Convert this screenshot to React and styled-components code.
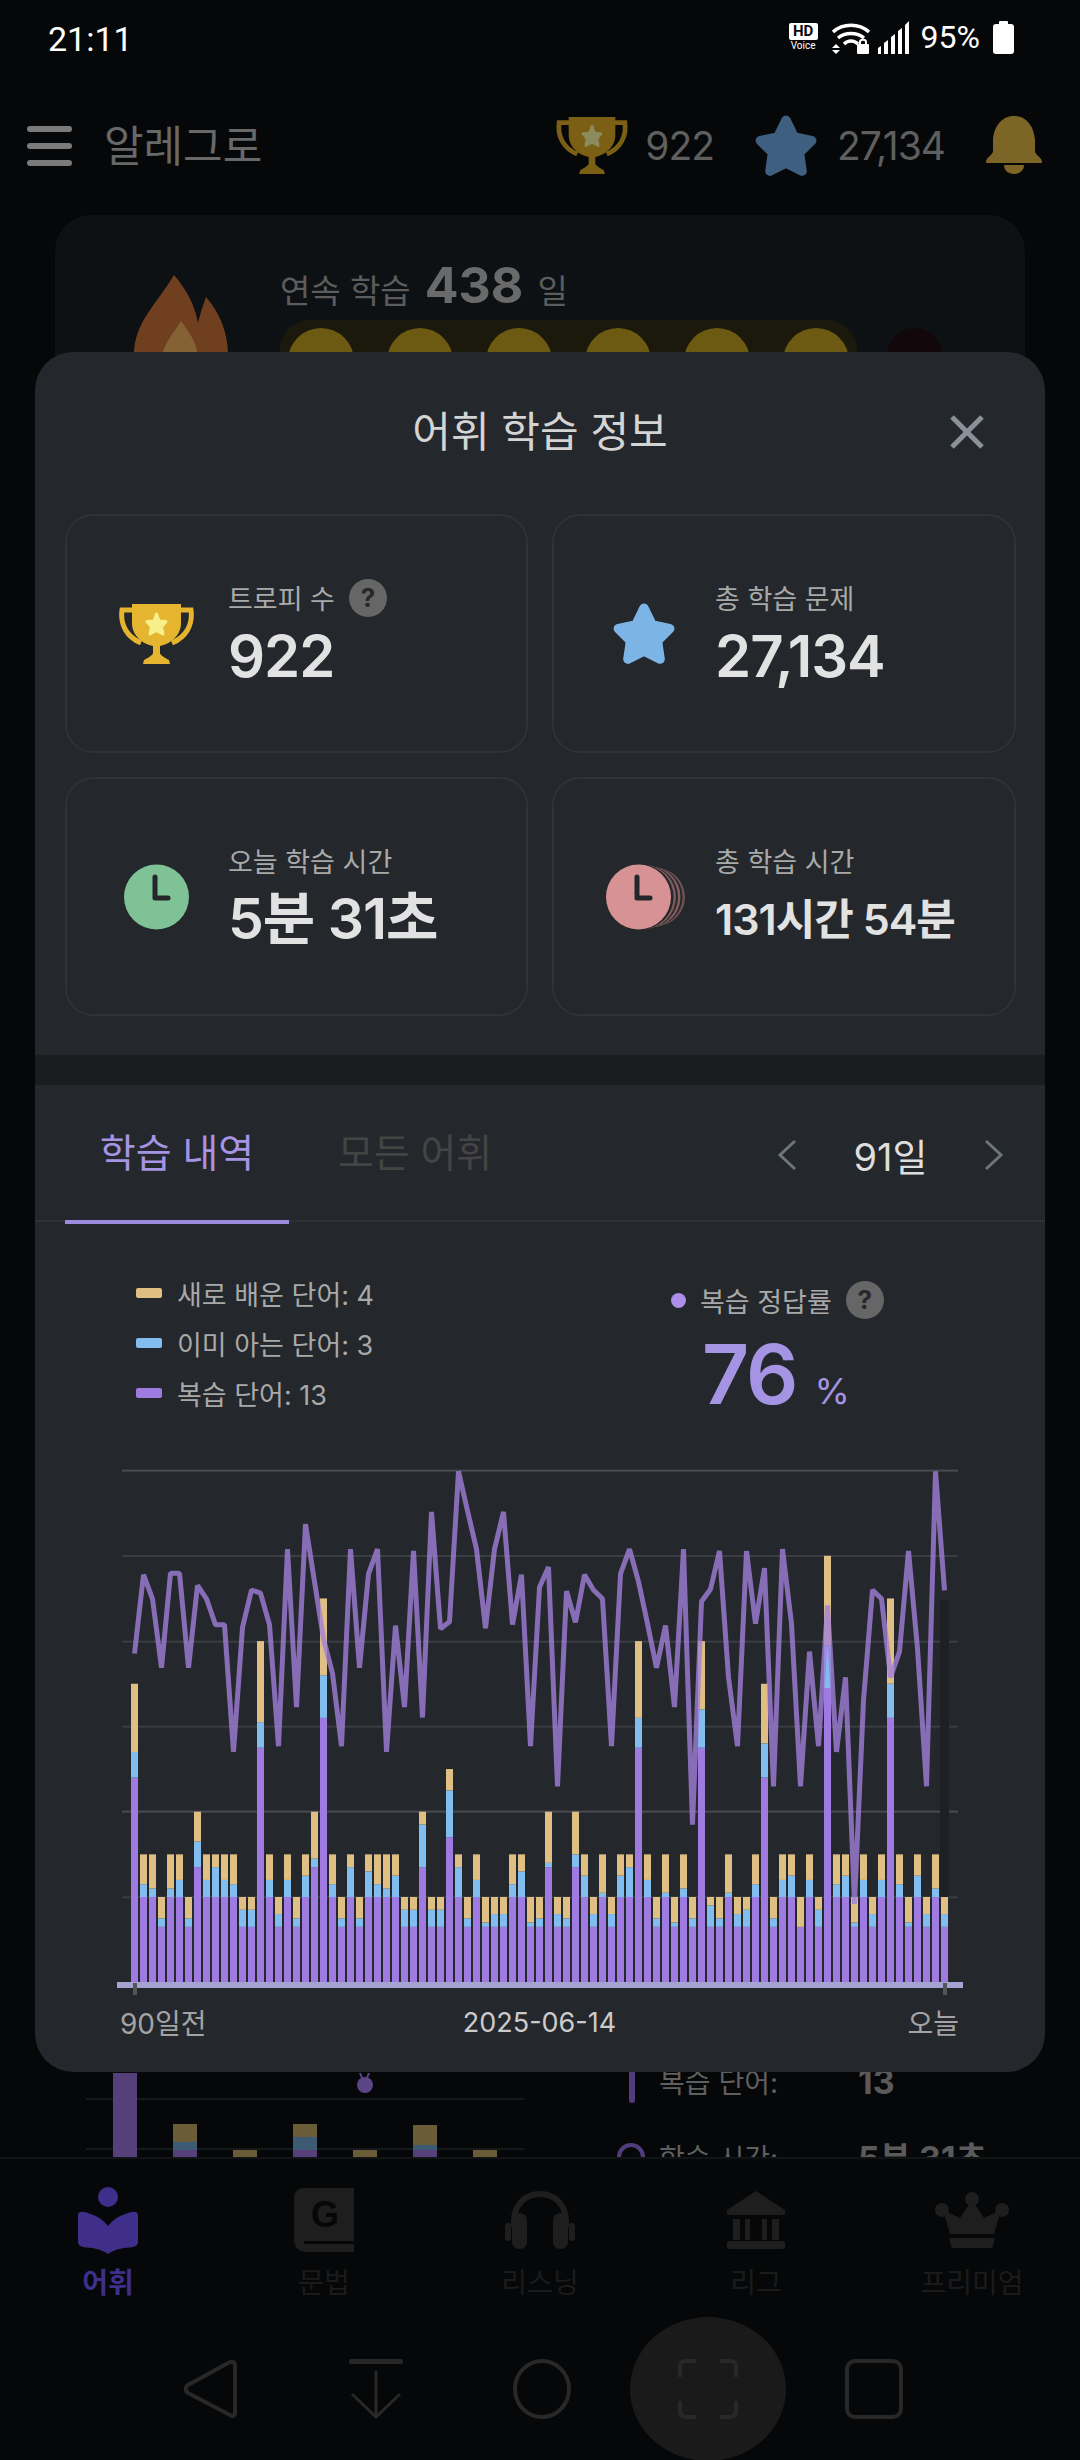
import React from 'react';
import styled, { createGlobalStyle } from 'styled-components';

const FONT = `Inter, "Noto Sans CJK KR", "Noto Sans", sans-serif`;

const Global = createGlobalStyle`
  html, body { margin: 0; padding: 0; background: #060708; }
  * { box-sizing: border-box; }
`;

const Screen = styled.div`
  position: relative;
  width: 1080px;
  height: 2460px;
  overflow: hidden;
  background: #060708;
  font-family: ${FONT};
  display: flex;
  flex-direction: column;
`;

/* status bar */
const StatusBar = styled.div`
  height: 76px;
  padding: 20px 66px 0 48px;
  display: flex;
  align-items: flex-start;
  justify-content: space-between;
  color: #fff;
  font-family: Roboto, sans-serif;
`;
const Clock = styled.span`
  font-size: 34px;
  line-height: 36px;
  margin-top: 1px;
`;
const StatusRight = styled.div`
  display: flex;
  align-items: center;
  height: 34px;
  gap: 7px;
`;
const Percent = styled.span`
  font-size: 32px;
  line-height: 34px;
  margin: 0 6px 0 4px;
`;
const HdBadge = styled.span`
  display: flex;
  flex-direction: column;
  align-items: center;
  width: 29px;
  margin-right: 6px;
  color: #fff;
`;
const HdBox = styled.span`
  width: 29px;
  height: 17px;
  background: #fff;
  color: #060708;
  border-radius: 2px;
  font: 700 15px/17px Roboto, sans-serif;
  text-align: center;
`;
const VoiceText = styled.span`
  font: 400 10px/11px Roboto, sans-serif;
`;

/* app header */
const AppHeader = styled.header`
  height: 139px;
  padding: 0 38px 0 27px;
  display: flex;
  align-items: center;
`;
const Burger = styled.div`
  width: 45px;
  height: 40px;
  display: flex;
  flex-direction: column;
  justify-content: space-between;
  & > i {
    display: block;
    height: 6px;
    border-radius: 3px;
    background: #7b7b7b;
  }
`;
const AppName = styled.span`
  margin-left: 32px;
  font-size: 43px;
  line-height: 48px;
  color: #686868;
  flex: 1;
`;
const Stat = styled.div`
  display: flex;
  align-items: center;
  gap: ${(p) => p.$gap}px;
  margin-right: ${(p) => p.$mr}px;
  font-size: 39px;
  letter-spacing: -1px;
  color: #5f5f5f;
`;

/* page behind the sheet */
const Behind = styled.main`
  flex: 1;
  min-height: 0;
  overflow: hidden;
  display: flex;
  flex-direction: column;
  justify-content: space-between;
`;
const StreakCard = styled.section`
  margin: 0 55px;
  height: 400px;
  border-radius: 36px;
  background: #0d1113;
  display: flex;
  padding: 47px 0 0 79px;
  gap: 52px;
`;
const StreakBody = styled.div`
  display: flex;
  flex-direction: column;
  gap: 6px;
`;
const StreakTitle = styled.div`
  display: flex;
  align-items: baseline;
  color: #5c5c5c;
  font-size: 33px;
  line-height: 46px;
  gap: 14px;
  & b {
    font-size: 50px;
    color: #6a6a6a;
    font-weight: 700;
  }
`;
const CoinLine = styled.div`
  display: flex;
  align-items: flex-start;
  gap: 30px;
`;
const CoinRow = styled.div`
  width: 577px;
  height: 70px;
  border-radius: 30px;
  background: #1a190c;
  padding: 8px 8px 0;
  display: flex;
  gap: 33px;
`;
const Coin = styled.span`
  width: 66px;
  height: 66px;
  border-radius: 50%;
  background: #6d5a12;
  flex: none;
`;
const DimCoin = styled.span`
  width: 56px;
  height: 56px;
  margin-top: 8px;
  border-radius: 50%;
  background: #12070a;
  flex: none;
`;
const CutRow = styled.div`
  height: 84px;
  flex: none;
  display: flex;
  padding-left: 86px;
`;
const CutList = styled.div`
  margin: -14px 0 0 91px;
  display: flex;
  flex-direction: column;
  gap: 43px;
`;
const CutItem = styled.div`
  display: grid;
  grid-template-columns: 42px 199px auto;
  align-items: center;
  height: 30px;
  color: #5f5f5f;
  font-size: 28px;
  & b {
    font-size: 34px;
    font-weight: 700;
    color: #5a5a5a;
  }
`;
const CutBar = styled.i`
  width: 6px;
  height: 44px;
  background: #513d7c;
  border-radius: 3px;
  margin-left: 12px;
`;
const CutClock = styled.i`
  width: 28px;
  height: 28px;
  border: 4px solid #513d7c;
  border-radius: 50%;
`;

/* bottom nav */
const BottomNav = styled.nav`
  flex: none;
  height: 160px;
  border-top: 2px solid #111416;
  display: grid;
  grid-template-columns: repeat(5, 216px);
`;
const NavItem = styled.div`
  display: flex;
  flex-direction: column;
  align-items: center;
  padding-top: 26px;
  gap: 11px;
  color: ${(p) => p.$color};
  font-size: 28px;
  line-height: 34px;
  font-weight: ${(p) => (p.$active ? 700 : 400)};
`;
const NavIconBox = styled.div`
  height: 70px;
  display: flex;
  align-items: center;
`;

const SysNav = styled.div`
  flex: none;
  height: 143px;
  padding-left: 127px;
  display: flex;
`;
const SysSlot = styled.div`
  width: 166px;
  height: 143px;
  display: flex;
  align-items: center;
  justify-content: center;
`;
const CaptureRound = styled.div`
  width: 156px;
  height: 144px;
  border-radius: 50%;
  background: #1a1a1a;
  display: flex;
  align-items: center;
  justify-content: center;
`;

/* modal sheet */
const Sheet = styled.section`
  position: absolute;
  top: 352px;
  left: 35px;
  width: 1010px;
  height: 1720px;
  border-radius: 38px;
  background: #24272b;
  display: flex;
  flex-direction: column;
`;
const SheetHead = styled.div`
  height: 162px;
  display: grid;
  grid-template-columns: 1fr auto 1fr;
  align-items: center;
  padding: 0 60px 3px;
`;
const SheetTitle = styled.h2`
  grid-column: 2;
  margin: 0;
  font-size: 42px;
  line-height: 50px;
  font-weight: 400;
  color: #d4d4d4;
`;
const CloseBtn = styled.div`
  grid-column: 3;
  justify-self: end;
  width: 36px;
  height: 36px;
`;
const CardGrid = styled.div`
  padding: 0 29px 0 30px;
  display: grid;
  grid-template-columns: 463px 464px;
  grid-auto-rows: 239px;
  column-gap: 24px;
  row-gap: 24px;
`;
const Card = styled.div`
  border: 2px solid #2f3236;
  border-radius: 28px;
  display: grid;
  grid-template-columns: 161px 1fr;
  align-items: center;
`;
const CardIcon = styled.div`
  display: flex;
  justify-content: center;
  padding-left: ${(p) => p.$pad || 18}px;
`;
const CardText = styled.div`
  display: flex;
  flex-direction: column;
  gap: 10px;
`;
const CardLabel = styled.div`
  display: flex;
  align-items: center;
  gap: 14px;
  height: 34px;
  font-size: 27px;
  color: #a9a9a9;
`;
const CardValue = styled.div`
  height: 62px;
  font-size: ${(p) => p.$size}px;
  line-height: 62px;
  font-weight: 600;
  letter-spacing: ${(p) => p.$ls}px;
  color: #e2e2e2;
  white-space: nowrap;
`;
const Help = styled.span`
  width: 38px;
  height: 38px;
  flex: none;
  border-radius: 50%;
  background: #666;
  color: #26282b;
  font: 700 26px/38px ${FONT};
  text-align: center;
`;
const Band = styled.div`
  margin-top: 39px;
  height: 30px;
  background: #1a1c1f;
  flex: none;
`;
const TabBar = styled.div`
  height: 137px;
  flex: none;
  border-bottom: 2px solid #2e3135;
  display: flex;
  padding: 0 41px 0 30px;
`;
const Tab = styled.div`
  position: relative;
  width: ${(p) => p.$w}px;
  height: 137px;
  padding-top: 45px;
  text-align: center;
  font-size: 39px;
  line-height: 46px;
  color: ${(p) => (p.$on ? '#a594e4' : '#444')};
  ${(p) =>
    p.$on
      ? `&::after { content: ''; position: absolute; left: 0; right: 0; bottom: -2px; height: 4px; background: #9d8be0; }`
      : ''}
`;
const Period = styled.div`
  margin-left: auto;
  height: 139px;
  display: flex;
  align-items: center;
  font-size: 38px;
  color: #dedede;
`;
const PeriodLabel = styled.span`
  width: 187px;
  text-align: center;
`;
const LegendArea = styled.div`
  flex: none;
  height: 218px;
  display: flex;
  padding: 53px 0 0 101px;
`;
const LegendList = styled.div`
  width: 535px;
  display: flex;
  flex-direction: column;
  gap: 14px;
`;
const LegendRow = styled.div`
  display: flex;
  align-items: center;
  height: 36px;
  gap: 15px;
  font-size: 27px;
  color: #a9a9a9;
  &::before {
    content: '';
    width: 26px;
    height: 10px;
    border-radius: 2px;
    background: ${(p) => p.$c};
  }
`;
const RateBox = styled.div`
  display: flex;
  flex-direction: column;
`;
const RateHead = styled.div`
  display: flex;
  align-items: center;
  font-size: 27px;
  height: 40px;
  margin-top: 5px;
  color: #a9a9a9;
  gap: 14px;
  &::before {
    content: '';
    width: 15px;
    height: 15px;
    border-radius: 50%;
    background: #ad8ee8;
  }
`;
const RateValue = styled.div`
  margin: 9px 0 0 31px;
  display: flex;
  align-items: baseline;
  gap: 18px;
  color: #a594e4;
  font-size: 36px;
  & b {
    font-size: 82px;
    line-height: 92px;
    font-weight: 600;
    letter-spacing: -2px;
  }
`;
const ChartSvg = styled.svg`
  display: block;
  flex: none;
`;
const AxisLabels = styled.div`
  flex: none;
  display: grid;
  grid-template-columns: 1fr auto 1fr;
  align-items: center;
  padding: 0 86px 0 85px;
  height: 44px;
  font-size: 28px;
  color: #a3a3a3;
  & > :last-child {
    justify-self: end;
  }
`;
const DateLabel = styled.span`
  color: #cbcbcb;
  font-size: 27px;
`;

/* data read from the picture: review, known, new */
const BARS = `48,6,16 20,3,7 20,2,8 13,2,5 20,2,8 20,4,6 13,2,5 27,6,7 20,4,6 20,7,3 20,4,6 20,3,7 13,4,3 13,4,3 55,6,19 20,4,6 13,3,4 20,4,6 13,2,5 20,5,5 27,2,11 62,10,18 20,3,7 13,2,5 20,7,3 13,2,5 20,6,4 20,3,7 20,2,8 20,5,5 13,4,3 13,4,3 27,10,3 13,4,3 13,4,3 34,11,5 20,7,3 13,2,5 20,4,6 13,1,6 13,3,4 13,3,4 20,3,7 20,6,4 13,1,6 13,2,5 27,1,12 13,3,4 13,2,5 27,3,10 20,5,5 13,3,4 20,1,9 13,3,4 20,5,5 20,7,3 55,7,18 20,4,6 13,2,5 20,1,9 13,1,6 20,2,8 13,2,5 55,9,16 13,5,2 13,2,5 20,1,9 13,3,4 13,4,3 20,3,7 48,8,14 13,2,5 20,4,6 20,5,5 13,0,7 20,4,6 13,4,3 69,10,21 20,3,7 20,5,5 13,1,6 20,4,6 13,3,4 20,4,6 62,8,20 20,3,7 13,1,6 20,5,5 13,3,4 20,2,8 13,3,4`
  .split(' ')
  .map((s) => s.split(',').map(Number));

const LINE = [558,352,415,595,348,348,595,380,415,483,483,815,490,392,400,483,800,285,698,220,370,520,610,800,285,595,350,285,815,485,698,290,725,188,493,475,82,185,285,492,285,188,482,352,800,385,332,905,395,476,352,392,415,800,350,285,370,480,595,485,698,285,1005,422,390,290,620,800,290,480,335,905,285,480,905,553,800,432,815,620,1212,680,392,415,620,553,290,545,905,82,393];

const BASE = 1982.3;
const U = 4.265;

const Chart = () => {
  const line = LINE.map((z, i) => `${134.5 + 9 * i},${(1440 + z / 2.613).toFixed(1)}`).join(' ');
  return (
    <ChartSvg width="1010" height="560" viewBox="35 1440 1010 560">
      {[1470.6, 1556, 1641.7, 1726.6, 1811.6, 1897.3].map((y, i) => (
        <rect key={y} x="122" y={y - 1} width="836" height="2" fill={i === 0 || i === 4 ? '#484c50' : '#3a3d41'} />
      ))}
      <rect x="940" y="1600" width="9" height="297" fill="#1e2023" />
      {BARS.map(([r, k, n], i) => {
        const x = 131 + 9 * i;
        const rh = r * U;
        const kh = k * U;
        const nh = n * U;
        return (
          <g key={i}>
            <rect x={x} y={BASE - rh} width="7" height={rh} fill="#9f7ae0" />
            <rect x={x} y={BASE - rh - kh} width="7" height={kh} fill="#82bdf0" />
            <rect x={x} y={BASE - rh - kh - nh} width="7" height={nh} fill="#dfbf84" />
          </g>
        );
      })}
      <rect x="117" y="1982" width="846" height="6" fill="#a5a3d2" />
      <rect x="133" y="1983" width="4" height="12" fill="#555" />
      <rect x="943" y="1983" width="4" height="12" fill="#555" />
      <polyline points={line} fill="none" stroke="#a080d8" strokeOpacity="0.8" strokeWidth="5" strokeLinejoin="bevel" />
    </ChartSvg>
  );
};

const StarShape = ({ size, fill, w = 9 }) => (
  <svg width={size} height={size} viewBox="2 1 60 60" style={{ display: 'block' }}>
    <polygon
      points="32,7 39.5,22.5 56,26 44.5,37.5 47,54.5 32,47 17,54.5 19.5,37.5 8,26 24.5,22.5"
      fill={fill}
      stroke={fill}
      strokeWidth={w}
      strokeLinejoin="round"
    />
  </svg>
);

const Trophy = ({ w, h, cup, star }) => (
  <svg width={w} height={h} viewBox="0 0 75 62" style={{ display: 'block' }}>
    <path
      d="M13 1H62V20C62 33 51 41 41 43V50C41 52 46 55 50 57L51 61H24L25 57C29 55 34 52 34 50V43C24 41 13 33 13 20Z"
      fill={cup}
    />
    <path d="M14 7H3C1 22 8 34 22 40M61 7H72C74 22 67 34 53 40" fill="none" stroke={cup} strokeWidth="5" />
    <polygon
      points="37.5,11 40,18 47,18.5 42.5,24 44,31 37.5,27.5 31,31 32.5,24 28,18.5 35,18"
      fill={star}
      stroke={star}
      strokeWidth="3"
      strokeLinejoin="round"
    />
  </svg>
);

const ClockIcon = ({ color }) => (
  <svg width="65" height="66" viewBox="0 0 65 66" style={{ display: 'block' }}>
    <circle cx="32.5" cy="33" r="32.5" fill={color} />
    <path d="M31 13V34H44" fill="none" stroke="#23262a" strokeWidth="5" strokeLinecap="round" strokeLinejoin="round" />
  </svg>
);

const StackClock = () => (
  <svg width="82" height="66" viewBox="0 0 82 66" style={{ display: 'block' }}>
    <circle cx="50" cy="33" r="29" fill="#6e5153" />
    <circle cx="47" cy="33" r="29.5" fill="#24272b" />
    <circle cx="44" cy="33" r="30.5" fill="#86605f" />
    <circle cx="41" cy="33" r="31" fill="#24272b" />
    <circle cx="38" cy="33" r="32" fill="#7d5b5d" />
    <circle cx="35" cy="33" r="32.5" fill="#24272b" />
    <circle cx="32.5" cy="33" r="32.5" fill="#d79295" />
    <path d="M31 13V34H44" fill="none" stroke="#23262a" strokeWidth="5" strokeLinecap="round" strokeLinejoin="round" />
  </svg>
);

const Chevron = ({ dir }) => (
  <svg width="20" height="32" viewBox="0 0 20 32" style={{ display: 'block' }}>
    <path d={dir === 'l' ? 'M18 2L3 16L18 30' : 'M2 2L17 16L2 30'} fill="none" stroke="#6d757d" strokeWidth="3" />
  </svg>
);

const BehindBars = () => (
  <svg width="440" height="84" viewBox="86 2072 440 84" style={{ display: 'block', flex: 'none' }}>
    <rect x="86" y="2097" width="438" height="2" fill="#14191b" />
    <rect x="86" y="2147" width="438" height="2" fill="#14191b" />
    <rect x="113" y="2072" width="24" height="84" fill="#55407a" />
    <rect x="173" y="2123" width="24" height="18" fill="#6b5c38" />
    <rect x="173" y="2141" width="24" height="8" fill="#3d5a73" />
    <rect x="173" y="2149" width="24" height="7" fill="#55407a" />
    <rect x="293" y="2123" width="24" height="13" fill="#6b5c38" />
    <rect x="293" y="2136" width="24" height="13" fill="#3d5a73" />
    <rect x="293" y="2149" width="24" height="7" fill="#55407a" />
    <rect x="413" y="2124" width="24" height="20" fill="#6b5c38" />
    <rect x="413" y="2144" width="24" height="5" fill="#3d5a73" />
    <rect x="413" y="2149" width="24" height="7" fill="#55407a" />
    <rect x="233" y="2149" width="24" height="7" fill="#6b5c38" />
    <rect x="353" y="2149" width="24" height="7" fill="#6b5c38" />
    <rect x="473" y="2149" width="24" height="7" fill="#6b5c38" />
    <path d="M360 2072L364 2082M369 2072L365 2082" stroke="#5a4587" strokeWidth="2" />
    <ellipse cx="365" cy="2084" rx="8" ry="8" fill="#5a4587" />
  </svg>
);

const Flame = () => (
  <svg width="94" height="130" viewBox="0 0 94 130" style={{ display: 'block', flex: 'none', marginTop: 13 }}>
    <path d="M40 0C52 14 61 30 64 48C67 36 70 28 72 22C86 38 94 58 94 80V130H0V80C0 48 22 30 40 0Z" fill="#6f3f20" />
    <path d="M47 46C56 58 64 70 64 84V130H28V84C28 70 40 58 47 46Z" fill="#846233" />
  </svg>
);

const Bell = () => (
  <svg width="56" height="59" viewBox="0 0 56 59" style={{ display: 'block' }}>
    <path d="M28 0C40 0 48 10 49 24V35C49 39 56 41 56 46C56 47 55 47 54 47H2C1 47 0 47 0 46C0 41 7 39 7 35V24C8 10 16 0 28 0Z" fill="#7d6528" />
    <path d="M18 49H38C38 54 34 58 28 58C22 58 18 54 18 49Z" fill="#7d6528" />
  </svg>
);

const BookPerson = () => (
  <svg width="60" height="67" viewBox="0 0 60 67" style={{ display: 'block' }}>
    <ellipse cx="30" cy="10" rx="10" ry="10" fill="#3f2f8a" />
    <path
      d="M0 28C0 25 3 24 6 25C15 27 24 31 30 39C36 31 45 27 54 25C57 24 60 25 60 28V55C60 58 58 59 55 60C45 61 37 62 30 67C23 62 15 61 5 60C2 59 0 58 0 55Z"
      fill="#3f2f8a"
    />
  </svg>
);

const NAVC = '#1e1e1e';
const NAVT = '#1b1b1b';
const GBook = () => (
  <svg width="60" height="64" viewBox="0 0 60 64" style={{ display: 'block' }}>
    <path d="M10 0H60V64H12C5 64 0 59 0 52V10C0 4 4 0 10 0Z" fill={NAVC} />
    <rect x="10" y="53" width="50" height="3" fill="#060708" />
    <text x="31" y="39" textAnchor="middle" fontFamily="Liberation Sans, sans-serif" fontWeight="700" fontSize="36" fill="#060708">
      G
    </text>
  </svg>
);

const Headphones = () => (
  <svg width="70" height="58" viewBox="0 0 70 58" style={{ display: 'block' }}>
    <path d="M9 36V30C9 14 20 3 35 3C50 3 61 14 61 30V36" fill="none" stroke={NAVC} strokeWidth="6" />
    <rect x="0" y="32" width="6" height="18" rx="3" fill={NAVC} />
    <rect x="64" y="32" width="6" height="18" rx="3" fill={NAVC} />
    <rect x="7" y="22" width="15" height="36" rx="7" fill={NAVC} />
    <rect x="48" y="22" width="15" height="36" rx="7" fill={NAVC} />
  </svg>
);

const Bank = () => (
  <svg width="58" height="58" viewBox="0 0 58 58" style={{ display: 'block' }}>
    <path d="M29 0L58 19V24H0V19Z" fill={NAVC} />
    <rect x="6" y="28" width="7" height="21" fill={NAVC} />
    <rect x="18" y="28" width="5" height="21" fill={NAVC} />
    <rect x="35" y="28" width="5" height="21" fill={NAVC} />
    <rect x="45" y="28" width="7" height="21" fill={NAVC} />
    <rect x="0" y="50" width="58" height="8" rx="2" fill={NAVC} />
  </svg>
);

const Crown = () => (
  <svg width="74" height="56" viewBox="0 0 74 56" style={{ display: 'block' }}>
    <ellipse cx="37" cy="7" rx="7" ry="7" fill={NAVC} />
    <ellipse cx="7" cy="18" rx="7" ry="7" fill={NAVC} />
    <ellipse cx="67" cy="18" rx="7" ry="7" fill={NAVC} />
    <path d="M37 8L49 26L66 18L59 42H15L8 18L25 26Z" fill={NAVC} />
    <path d="M14 46H60L58 54C58 55 57 56 56 56H18C17 56 16 55 16 54Z" fill={NAVC} />
  </svg>
);

const NAV = [
  { label: '어휘', icon: <BookPerson />, color: '#3f2f8a', active: true },
  { label: '문법', icon: <GBook />, color: NAVT },
  { label: '리스닝', icon: <Headphones />, color: NAVT },
  { label: '리그', icon: <Bank />, color: NAVT },
  { label: '프리미엄', icon: <Crown />, color: NAVT },
];

const S = '#282828';
const BackIcon = () => (
  <svg width="53" height="60" viewBox="0 0 53 60" style={{ display: 'block' }}>
    <path d="M48 3C50 3 51 4 51 6V54C51 57 48 58 46 56L4 34C1 32 1 28 4 26L46 3Z" fill="none" stroke={S} strokeWidth="4" strokeLinejoin="round" />
  </svg>
);
const DownIcon = () => (
  <svg width="54" height="60" viewBox="0 0 54 60" style={{ display: 'block' }}>
    <rect x="0" y="0" width="54" height="5" rx="2" fill={S} />
    <path d="M27 12V58M3 35L27 58L51 35" fill="none" stroke={S} strokeWidth="3" />
  </svg>
);
const HomeIcon = () => (
  <svg width="58" height="60" viewBox="0 0 58 60" style={{ display: 'block' }}>
    <ellipse cx="29" cy="30" rx="27" ry="28" fill="none" stroke={S} strokeWidth="4" />
  </svg>
);
const CaptureIcon = () => (
  <svg width="60" height="60" viewBox="0 0 60 60" style={{ display: 'block' }}>
    <path d="M2 18V8C2 4 4 2 8 2H18M42 2H52C56 2 58 4 58 8V18M58 42V52C58 56 56 58 52 58H42M18 58H8C4 58 2 56 2 52V42" fill="none" stroke="#282828" strokeWidth="4" />
  </svg>
);
const RecentIcon = () => (
  <svg width="58" height="60" viewBox="0 0 58 60" style={{ display: 'block' }}>
    <rect x="2" y="2" width="54" height="56" rx="8" fill="none" stroke={S} strokeWidth="4" />
  </svg>
);

const Wifi = () => (
  <svg width="40" height="33" viewBox="0 0 40 33" style={{ display: 'block' }}>
    <path d="M2 11C12 2 28 2 38 11M7 17C14 11 26 11 33 17M13 23C17 19 23 19 27 23" fill="none" stroke="#fff" strokeWidth="3.5" />
    <path d="M5 23L9 27H1ZM5 33L1 29H9Z" fill="#fff" />
    <rect x="26" y="23" width="12" height="10" rx="1" fill="#fff" />
    <path d="M29 24V21C29 18 35 18 35 21V24" fill="none" stroke="#fff" strokeWidth="2" />
  </svg>
);
const Signal = () => (
  <svg width="32" height="33" viewBox="0 0 32 33" style={{ display: 'block' }}>
    <path d="M0 33V27L3 25V33ZM6 33V22L10 19V33ZM13 33V16L17 13V33ZM20 33V10L24 7V33ZM27 33V4L31 0V33Z" fill="#fff" />
  </svg>
);
const Battery = () => (
  <svg width="21" height="33" viewBox="0 0 21 33" style={{ display: 'block' }}>
    <rect x="6" y="0" width="9" height="4" rx="1" fill="#fff" />
    <rect x="0" y="3" width="21" height="30" rx="3" fill="#fff" />
  </svg>
);

export default function App() {
  return (
    <>
      <Global />
      <Screen>
        <StatusBar>
          <Clock>21:11</Clock>
          <StatusRight>
            <HdBadge>
              <HdBox>HD</HdBox>
              <VoiceText>Voice</VoiceText>
            </HdBadge>
            <Wifi />
            <Signal />
            <Percent>95%</Percent>
            <Battery />
          </StatusRight>
        </StatusBar>

        <AppHeader>
          <Burger>
            <i />
            <i />
            <i />
          </Burger>
          <AppName>알레그로</AppName>
          <Stat $gap={17} $mr={40}>
            <Trophy w={72} h={59} cup="#7a5f14" star="#8b8b5e" />
            922
          </Stat>
          <Stat $gap={19} $mr={41}>
            <StarShape size={64} fill="#3f5f80" />
            27,134
          </Stat>
          <Bell />
        </AppHeader>

        <Behind>
          <StreakCard>
            <Flame />
            <StreakBody>
              <StreakTitle>
                <span>연속 학습</span>
                <b>438</b>
                <span>일</span>
              </StreakTitle>
              <CoinLine>
                <CoinRow>
                  {[0, 1, 2, 3, 4, 5].map((i) => (
                    <Coin key={i} />
                  ))}
                </CoinRow>
                <DimCoin />
              </CoinLine>
            </StreakBody>
          </StreakCard>
          <CutRow>
            <BehindBars />
            <CutList>
              <CutItem>
                <CutBar />
                <span>복습 단어:</span>
                <b>13</b>
              </CutItem>
              <CutItem>
                <CutClock />
                <span>학습 시간:</span>
                <b>5분 31초</b>
              </CutItem>
            </CutList>
          </CutRow>
        </Behind>

        <BottomNav>
          {NAV.map((n) => (
            <NavItem key={n.label} $color={n.color} $active={n.active}>
              <NavIconBox>{n.icon}</NavIconBox>
              {n.label}
            </NavItem>
          ))}
        </BottomNav>
        <SysNav>
          <SysSlot>
            <BackIcon />
          </SysSlot>
          <SysSlot>
            <DownIcon />
          </SysSlot>
          <SysSlot>
            <HomeIcon />
          </SysSlot>
          <SysSlot>
            <CaptureRound>
              <CaptureIcon />
            </CaptureRound>
          </SysSlot>
          <SysSlot>
            <RecentIcon />
          </SysSlot>
        </SysNav>

        <Sheet>
          <SheetHead>
            <SheetTitle>어휘 학습 정보</SheetTitle>
            <CloseBtn>
              <svg width="36" height="36" viewBox="0 0 36 36" style={{ display: 'block' }}>
                <path d="M3 3L33 33M33 3L3 33" stroke="#8a9199" strokeWidth="5" />
              </svg>
            </CloseBtn>
          </SheetHead>
          <CardGrid>
            <Card>
              <CardIcon>
                <Trophy w={75} h={62} cup="#e5b52f" star="#f6ef8c" />
              </CardIcon>
              <CardText>
                <CardLabel>
                  트로피 수<Help>?</Help>
                </CardLabel>
                <CardValue $size={58} $ls={-1}>
                  922
                </CardValue>
              </CardText>
            </Card>
            <Card>
              <CardIcon>
                <StarShape size={64} fill="#7cb4e6" />
              </CardIcon>
              <CardText>
                <CardLabel>총 학습 문제</CardLabel>
                <CardValue $size={58} $ls={-1}>
                  27,134
                </CardValue>
              </CardText>
            </Card>
            <Card>
              <CardIcon>
                <ClockIcon color="#7fc295" />
              </CardIcon>
              <CardText>
                <CardLabel>오늘 학습 시간</CardLabel>
                <CardValue $size={57} $ls={-1}>
                  5분 31초
                </CardValue>
              </CardText>
            </Card>
            <Card>
              <CardIcon $pad={24}>
                <StackClock />
              </CardIcon>
              <CardText>
                <CardLabel>총 학습 시간</CardLabel>
                <CardValue $size={43} $ls={-1}>
                  131시간 54분
                </CardValue>
              </CardText>
            </Card>
          </CardGrid>
          <Band />
          <TabBar>
            <Tab $on $w={224}>
              학습 내역
            </Tab>
            <Tab $w={252}>모든 어휘</Tab>
            <Period>
              <Chevron dir="l" />
              <PeriodLabel>91일</PeriodLabel>
              <Chevron dir="r" />
            </Period>
          </TabBar>
          <LegendArea>
            <LegendList>
              <LegendRow $c="#dfbf84">새로 배운 단어: 4</LegendRow>
              <LegendRow $c="#82bdf0">이미 아는 단어: 3</LegendRow>
              <LegendRow $c="#9f7ae0">복습 단어: 13</LegendRow>
            </LegendList>
            <RateBox>
              <RateHead>
                복습 정답률<Help>?</Help>
              </RateHead>
              <RateValue>
                <b>76</b>%
              </RateValue>
            </RateBox>
          </LegendArea>
          <Chart />
          <AxisLabels>
            <span>90일전</span>
            <DateLabel>2025-06-14</DateLabel>
            <span>오늘</span>
          </AxisLabels>
        </Sheet>
      </Screen>
    </>
  );
}
